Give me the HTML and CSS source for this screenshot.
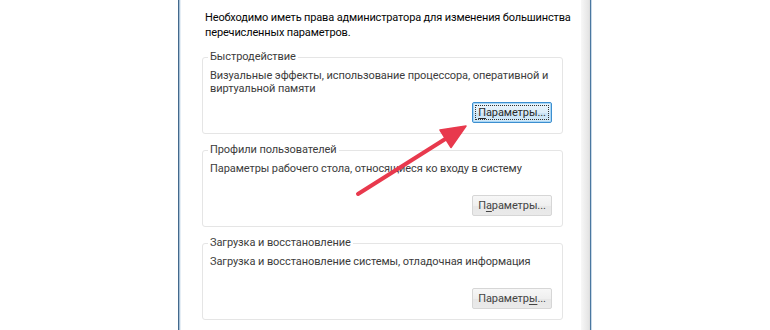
FILE: index.html
```html
<!DOCTYPE html>
<html lang="ru">
<head>
<meta charset="utf-8">
<title>Свойства системы</title>
<link rel="stylesheet" href="styles.css">
</head>
<body>
<div class="window">
  <div class="frame-left"></div>
  <div class="content">
    <p class="intro">Необходимо иметь права администратора для изменения большинства перечисленных параметров.</p>

    <fieldset class="group">
      <legend>Быстродействие</legend>
      <div class="desc">Визуальные эффекты, использование процессора, оперативной и виртуальной памяти</div>
      <div class="actions"><button class="btn focused"><span class="focus-ring"><u>П</u>араметры...</span></button></div>
    </fieldset>

    <fieldset class="group">
      <legend>Профили пользователей</legend>
      <div class="desc">Параметры рабочего стола, относящиеся ко входу в систему</div>
      <div class="actions"><button class="btn"><span class="focus-ring">П<u>а</u>раметры...</span></button></div>
    </fieldset>

    <fieldset class="group">
      <legend>Загрузка и восстановление</legend>
      <div class="desc">Загрузка и восстановление системы, отладочная информация</div>
      <div class="actions"><button class="btn"><span class="focus-ring">Параметр<u>ы</u>...</span></button></div>
    </fieldset>
  </div>
  <div class="frame-right"></div>
</div>

<svg class="arrow" width="770" height="330" viewBox="0 0 770 330" aria-hidden="true">
  <line x1="358" y1="194" x2="450" y2="136" stroke="#e8394d" stroke-width="4" stroke-linecap="round"/>
  <polygon points="466,126 451,147.5 440,130" fill="#e8394d" stroke="#e8394d" stroke-width="1.5" stroke-linejoin="round"/>
</svg>
</body>
</html>
```

FILE: styles.css
```css
html, body {
  margin: 0;
  padding: 0;
  background: #ffffff;
}

body {
  width: 770px;
  height: 330px;
  overflow: hidden;
  position: relative;
  font-family: Roboto, "Noto Sans", sans-serif;
  font-size: 11px;
  letter-spacing: -0.08px;
  color: #3a3a3a;
}

.window {
  width: 414px;
  height: 330px;
  margin: 0 auto;
  display: flex;
}

.frame-left {
  width: 3px;
  background: linear-gradient(to right, #43698c 0 1px, #a8c2d8 1px 2px, #e6eef5 2px 3px);
}

.frame-right {
  width: 11px;
  background: linear-gradient(to right, #f7f7f7 0, #e4e4e4 8px, #d8d8d8 9px, #4a77a0 9px, #4a77a0 10px, #c9d9e7 10px, #c9d9e7 11px);
}

.content {
  flex: 1;
  padding: 10px 18px 0 21px;
  background: #ffffff;
}

.intro {
  margin: 0 -18px 10px 3px;
  font-size: 11px;
  letter-spacing: -0.15px;
  line-height: 15px;
  color: #050505;
}

.group {
  margin: 0 0 9px 0;
  padding: 0 10px 10px 7px;
  border: 1px solid #e5e5e5;
  border-radius: 3px;
  min-width: 0;
  display: flex;
  flex-direction: column;
}

.group legend {
  margin-left: -2px;
  padding: 0 2px;
  font-size: 11px;
  line-height: 14px;
  color: #3c3c3c;
}

.desc {
  margin: 5px -8px 0 0;
  height: 28px;
  line-height: 13px;
  font-size: 11px;
  color: #3c3c3c;
}

.actions {
  margin-top: 5px;
  display: flex;
  justify-content: flex-end;
}

.btn {
  width: 80px;
  height: 21px;
  padding: 2px;
  margin: 0;
  font-family: inherit;
  font-size: 11px;
  letter-spacing: inherit;
  color: #444444;
  border: 1px solid #d6d6d6;
  border-radius: 2px;
  background: linear-gradient(to bottom, #f7f7f7 0%, #efefef 50%, #e7e7e7 51%, #eaeaea 100%);
  display: flex;
}

.btn .focus-ring {
  flex: 1;
  display: flex;
  align-items: center;
  justify-content: center;
  line-height: 14px;
  border: 1px solid transparent;
}

.btn u {
  text-decoration: underline;
  text-underline-offset: 2px;
}

.btn.focused {
  color: #2a2a2a;
  border-color: #3c8fd0;
  background: linear-gradient(to bottom, #eaf5fc 0%, #dcedf9 50%, #c9e3f6 51%, #d4eaf8 100%);
  box-shadow: inset 0 0 0 1px #a9d6f5;
}

.btn.focused .focus-ring {
  border: 1px dotted #333333;
}

.arrow {
  position: absolute;
  left: 0;
  top: 0;
  pointer-events: none;
}
```
